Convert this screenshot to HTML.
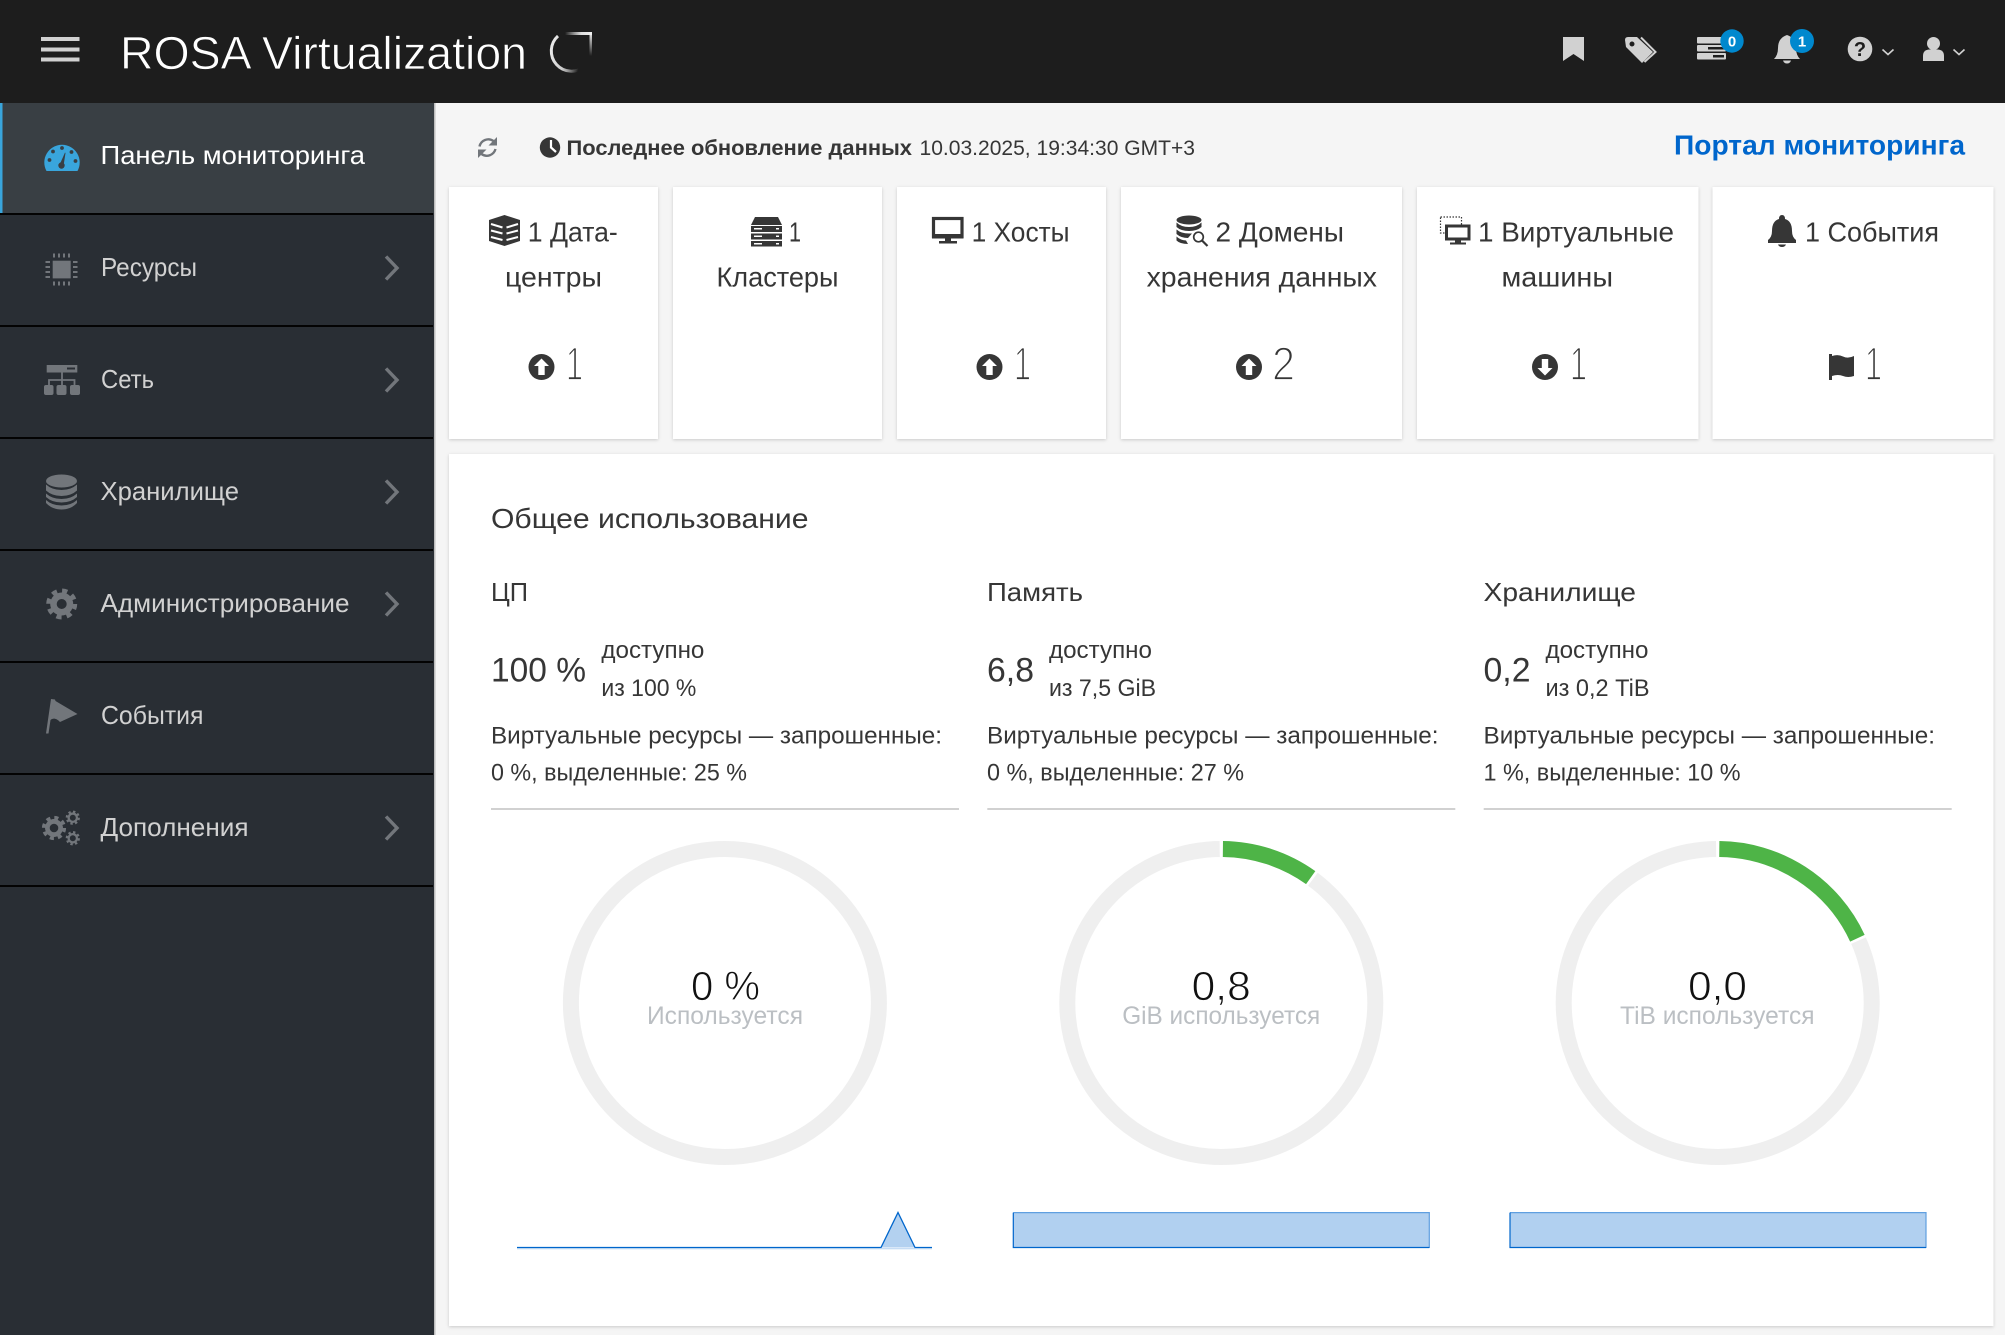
<!DOCTYPE html>
<html lang="ru"><head><meta charset="utf-8"><title>ROSA Virtualization</title>
<style>
html,body{margin:0;padding:0;background:#f5f5f5;width:2005px;height:1335px;overflow:hidden}
svg{display:block;font-family:"Liberation Sans",Arial,sans-serif}
text{white-space:pre}
.nav{font-size:26px;fill:#d1d1d1}
.card{font-size:27.5px;fill:#363636}
.num{font-size:47px;fill:#363636;stroke:#fff;stroke-width:1.7}
.h{font-size:26px;fill:#363636}
.big{font-size:34px;fill:#363636}
.sm{font-size:24px;fill:#363636}
.val{font-size:41px;fill:#111;stroke:#fff;stroke-width:.8;text-anchor:start}
.lbl{font-size:25px;fill:#bbbfc3}
.ic{fill:#72767b}
.dk{fill:#363636}
.hd{fill:#d1d1d1}
</style></head><body>
<svg width="2005" height="1335" viewBox="0 0 2005 1335" xmlns="http://www.w3.org/2000/svg">
<defs>
<filter id="sh" x="-5%" y="-5%" width="110%" height="110%"><feDropShadow dx="0" dy="1" stdDeviation="1.5" flood-color="#000" flood-opacity=".18"/></filter>
<linearGradient id="g1" x1="0" x2="1" y1="0" y2="0"><stop offset="0" stop-color="#fff" stop-opacity="0"/><stop offset=".6" stop-color="#ddd"/><stop offset="1" stop-color="#eee"/></linearGradient>
<linearGradient id="g2" x1="0" x2="0" y1="0" y2="1"><stop offset="0" stop-color="#eee"/><stop offset="1" stop-color="#fff" stop-opacity="0"/></linearGradient>
<linearGradient id="g3" x1="0" x2="1" y1="0" y2="0.3"><stop offset="0" stop-color="#eee"/><stop offset=".55" stop-color="#ccc"/><stop offset="1" stop-color="#fff" stop-opacity="0"/></linearGradient>
<g id="up"><circle r="13" fill="#363636"/><path d="M0-8.5 7.5-1H3.2V8H-3.2V-1H-7.5Z" fill="#fff"/></g>
<g id="down"><circle r="13" fill="#363636"/><path d="M0 8.5 7.5 1H3.2V-8H-3.2V1H-7.5Z" fill="#fff"/></g>
<g id="chev"><path d="M0 0 11 11.5 0 23" fill="none" stroke="#72767b" stroke-width="3.4"/></g>
<g id="gear"><circle r="11.5" class="ic"/><circle r="13.2" fill="none" stroke="#72767b" stroke-width="4.6" stroke-dasharray="5.2 5.17"/></g>
</defs>

<!-- backgrounds -->
<rect width="2005" height="1335" fill="#f5f5f5"/>
<rect width="2005" height="103" fill="#1d1d1d"/>
<rect y="103" width="434" height="1232" fill="#292e34"/>
<rect x="434" y="103" width="1.5" height="1232" fill="#bdbdbd"/>

<!-- header -->
<rect x="41" y="37" width="38.5" height="4" fill="#d1d1d1"/>
<rect x="41" y="47.5" width="38.5" height="4" fill="#d1d1d1"/>
<rect x="41" y="57.500" width="38.5" height="4" fill="#d1d1d1"/>
<text x="120" y="69" font-size="46" fill="#fff" stroke="#1d1d1d" stroke-width=".7" textLength="407" lengthAdjust="spacingAndGlyphs">ROSA Virtualization</text>
<rect x="565" y="32" width="27" height="3" fill="url(#g1)"/>
<rect x="589.500" y="32" width="2.500" height="24" fill="url(#g2)"/>
<path d="M558 36A19.500 19.500 0 1 0 585 66" stroke="url(#g3)" stroke-width="3" fill="none"/>

<!-- header icons -->
<path d="M1563 37H1584V61L1573.500 54 1563 61Z" class="hd"/>
<path d="M1625 40Q1625 37 1628 37H1637L1653 52 1642 63 1626 47ZM1632 41.500A2.500 2.500 0 1 0 1632 46.500 2.500 2.500 0 1 0 1632 41.500Z" class="hd" fill-rule="evenodd"/>
<path d="M1641 37.500 1655.500 52 1644.500 62" fill="none" stroke="#d1d1d1" stroke-width="2"/>
<g class="hd"><rect x="1697" y="37" width="29" height="6.500" rx="1"/><rect x="1697" y="45" width="29" height="6.500" rx="1"/><rect x="1697" y="53" width="29" height="6.500" rx="1"/></g>
<rect x="1713" y="55" width="11" height="2.500" fill="#1d1d1d"/><rect x="1708" y="47" width="16" height="2.500" fill="#1d1d1d"/>
<circle cx="1732" cy="41" r="11.700" fill="#0088ce"/>
<text x="1732" y="46.500" font-size="15" font-weight="bold" fill="#fff" text-anchor="middle">0</text>
<path d="M1787 35Q1796 38 1796 48 1796 55 1800 59H1774Q1778 55 1778 48 1778 38 1787 35ZM1783 60.500H1791Q1790 63.500 1787 63.500 1784 63.500 1783 60.500Z" class="hd"/>
<circle cx="1802" cy="41" r="12" fill="#0088ce"/>
<text x="1802" y="46.500" font-size="15" font-weight="bold" fill="#fff" text-anchor="middle">1</text>
<circle cx="1860" cy="49" r="12.300" class="hd"/>
<text x="1860" y="56" font-size="20" font-weight="bold" fill="#1d1d1d" text-anchor="middle">?</text>
<path d="M1882.500 49.500 1888 54.500 1893.500 49.500" fill="none" stroke="#d1d1d1" stroke-width="1.600"/>
<circle cx="1933.500" cy="43.500" r="6.500" class="hd"/>
<path d="M1923 61V56Q1923 50 1929 49.500H1938Q1944 50 1944 56V61Z" class="hd"/>
<path d="M1953.500 49.500 1959 54.500 1964.500 49.500" fill="none" stroke="#d1d1d1" stroke-width="1.600"/>

<!-- sidebar -->
<rect y="103" width="434" height="110" fill="#393f44"/>
<rect y="103" width="2.500" height="110" fill="#39a5dc"/>
<g fill="#030303">
<rect y="213" width="433" height="2"/><rect y="325" width="433" height="2"/><rect y="437" width="433" height="2"/><rect y="549" width="433" height="2"/><rect y="661" width="433" height="2"/><rect y="773" width="433" height="2"/><rect y="885" width="433" height="2"/>
</g>
<text x="100.500" y="164" class="nav" style="fill:#fff" textLength="264.500" lengthAdjust="spacingAndGlyphs">Панель мониторинга</text>
<text x="101" y="276" class="nav" textLength="96" lengthAdjust="spacingAndGlyphs">Ресурсы</text>
<text x="101" y="388" class="nav" textLength="53" lengthAdjust="spacingAndGlyphs">Сеть</text>
<text x="100.500" y="500" class="nav" textLength="138.500" lengthAdjust="spacingAndGlyphs">Хранилище</text>
<text x="100.500" y="612" class="nav" textLength="249" lengthAdjust="spacingAndGlyphs">Администрирование</text>
<text x="101" y="724" class="nav" textLength="102.500" lengthAdjust="spacingAndGlyphs">События</text>
<text x="100.500" y="836" class="nav" textLength="148" lengthAdjust="spacingAndGlyphs">Дополнения</text>
<use href="#chev" x="386" y="256.500"/><use href="#chev" x="386" y="368.500"/><use href="#chev" x="386" y="480.500"/><use href="#chev" x="386" y="592.500"/><use href="#chev" x="386" y="816.500"/>

<!-- dashboard icon -->
<path d="M46.500 171A17.700 17.700 0 1 1 77.500 171Z" fill="#39a5dc"/>
<g fill="#393f44"><circle cx="49.500" cy="160" r="1.900"/><circle cx="53" cy="151.500" r="1.900"/><circle cx="62" cy="148" r="1.900"/><circle cx="71.500" cy="152" r="1.900"/><circle cx="75.500" cy="161" r="1.900"/><circle cx="61.500" cy="165.500" r="3.200"/><path d="M59.500 165 65 152.500 65.500 153 63.500 166Z"/></g>

<!-- chip -->
<rect x="52.700" y="260.700" width="18" height="17.700" class="ic"/>
<g class="ic"><rect x="53" y="253.500" width="2" height="4"/><rect x="58" y="253.500" width="2" height="4"/><rect x="63" y="253.500" width="2" height="4"/><rect x="68" y="253.500" width="2" height="4"/>
<rect x="53" y="281.500" width="2" height="4"/><rect x="58" y="281.500" width="2" height="4"/><rect x="63" y="281.500" width="2" height="4"/><rect x="68" y="281.500" width="2" height="4"/>
<rect x="45.500" y="261" width="4.500" height="2"/><rect x="45.500" y="266" width="4.500" height="2"/><rect x="45.500" y="271" width="4.500" height="2"/><rect x="45.500" y="276" width="4.500" height="2"/>
<rect x="73" y="261" width="4.500" height="2"/><rect x="73" y="266" width="4.500" height="2"/><rect x="73" y="271" width="4.500" height="2"/><rect x="73" y="276" width="4.500" height="2"/></g>

<!-- network -->
<rect x="46.700" y="365" width="30.600" height="7.500" class="ic"/><rect x="67" y="367.500" width="8" height="2" fill="#292e34"/>
<path d="M62 372.500V385M49 385V380H74.500V385" fill="none" stroke="#72767b" stroke-width="1.800"/>
<rect x="44" y="385" width="9.500" height="10" rx="2" class="ic"/><rect x="56.500" y="385" width="10" height="10" rx="2" class="ic"/><rect x="70" y="385" width="10" height="10" rx="2" class="ic"/>

<!-- database -->
<ellipse cx="61.500" cy="481" rx="15.500" ry="6.500" class="ic"/>
<path d="M46 484.500Q52 490 61.500 490T77 484.500V490.500Q71 496 61.500 496T46 490.500ZM46 493.500Q52 499 61.500 499T77 493.500V497Q71 502.500 61.500 502.500T46 497ZM46 500Q52 505.500 61.500 505.500T77 500V503Q71 509.500 61.500 509.500T46 503Z" class="ic"/>

<!-- gear -->
<use href="#gear" x="61.700" y="604"/><circle cx="61.700" cy="604" r="5" fill="#292e34"/>
<!-- flag -->
<path d="M46 733.500 51 699 55 699.500 55.500 701 77.500 714 60 722C56 718 53 718 50.500 720L48.500 733.500Z" class="ic"/>
<!-- plugins -->
<g transform="translate(54,828) scale(.78)"><use href="#gear"/><circle r="5.500" fill="#292e34"/></g>
<g transform="translate(72.800,817.700) scale(.46)"><use href="#gear"/><circle r="6.500" fill="#292e34"/></g>
<g transform="translate(72.800,838.300) scale(.46)"><use href="#gear"/><circle r="6.500" fill="#292e34"/></g>

<!-- toolbar -->
<path d="M479.500 146.500A9 9 0 0 1 493.500 141M495.500 149A9 9 0 0 1 481.500 154" fill="none" stroke="#72767b" stroke-width="2.400"/>
<path d="M497 137V145.500H488.500ZM478 158V149.500H486.500Z" fill="#72767b"/>
<circle cx="550" cy="147.500" r="10.200" class="dk"/><path d="M551 140V147.500L556 152" fill="none" stroke="#fff" stroke-width="2.200"/>
<text x="566.500" y="155" font-size="21" font-weight="bold" fill="#363636" textLength="345.500" lengthAdjust="spacingAndGlyphs">Последнее обновление данных</text>
<text x="919.500" y="155" font-size="21" fill="#363636" textLength="275.500" lengthAdjust="spacingAndGlyphs">10.03.2025, 19:34:30 GMT+3</text>
<text x="1674" y="154.500" font-size="28" font-weight="bold" fill="#0066cc" textLength="291" lengthAdjust="spacingAndGlyphs">Портал мониторинга</text>

<!-- cards -->
<g fill="#fff" filter="url(#sh)">
<rect x="449" y="187" width="209" height="252"/>
<rect x="673" y="187" width="209" height="252"/>
<rect x="897" y="187" width="209" height="252"/>
<rect x="1121" y="187" width="281" height="252"/>
<rect x="1417" y="187" width="281.500" height="252"/>
<rect x="1712.500" y="187" width="281" height="252"/>
<rect x="449" y="454" width="1544.500" height="872"/>
</g>

<!-- card 1 -->
<path d="M504.500 215 520 220V241L504.500 246 489 241V220Z" class="dk"/>
<path d="M491 224 502.500 227.500M491 230.500 502.500 233.500M491 237 502.500 240M506.500 227.500 518 224M506.500 233.500 518 230.500M506.500 240 518 237" stroke="#fff" stroke-width="2" fill="none"/>
<text x="527.800" y="241.700" class="card" textLength="90" lengthAdjust="spacingAndGlyphs">1 Дата-</text>
<text x="505" y="286.700" class="card" textLength="97" lengthAdjust="spacingAndGlyphs">центры</text>
<use href="#up" x="541.500" y="367"/>
<text x="566" y="380" class="num" textLength="17" lengthAdjust="spacingAndGlyphs">1</text>
<!-- card 2 -->
<path d="M755 217H778L782 225H751Z" class="dk"/><rect x="751" y="226" width="31" height="6" class="dk"/><rect x="751" y="233.500" width="31" height="6" class="dk"/><rect x="751" y="241" width="31" height="5.500" class="dk"/>
<g fill="#fff"><rect x="754" y="228" width="8" height="1.500"/><rect x="776" y="228" width="3" height="1.500"/><rect x="754" y="235.500" width="8" height="1.500"/><rect x="776" y="235.500" width="3" height="1.500"/><rect x="754" y="243" width="8" height="1.500"/><rect x="776" y="243" width="3" height="1.500"/></g>
<text x="789" y="241.700" class="card" textLength="12" lengthAdjust="spacingAndGlyphs">1</text>
<text x="716.500" y="286.700" class="card" textLength="122" lengthAdjust="spacingAndGlyphs">Кластеры</text>
<!-- card 3 -->
<rect x="933.500" y="218.500" width="28.500" height="18" fill="none" stroke="#363636" stroke-width="3.200"/>
<rect x="932" y="234" width="31.500" height="4.500" class="dk"/><rect x="945" y="238" width="6" height="4" class="dk"/><rect x="939" y="241" width="18" height="2.500" class="dk"/>
<text x="971.600" y="241.700" class="card" textLength="98" lengthAdjust="spacingAndGlyphs">1 Хосты</text>
<use href="#up" x="989.500" y="367"/>
<text x="1014" y="380" class="num" textLength="17" lengthAdjust="spacingAndGlyphs">1</text>
<!-- card 4 -->
<ellipse cx="1189" cy="220" rx="12.500" ry="4.500" class="dk"/>
<path d="M1176.500 222.500Q1181 227 1189 227T1201.500 222.500V227Q1197 231 1189 231T1176.500 227ZM1176.500 229.500Q1181 233.500 1189 233.500L1192 233.500 1188 238Q1181 238 1176.500 234ZM1176.500 236.500Q1180 240 1186 240.500L1188 244Q1180 244 1176.500 240.500Z" class="dk"/>
<circle cx="1198.500" cy="237" r="4.800" fill="#fff" stroke="#363636" stroke-width="1.700"/>
<path d="M1202 240.500 1207.500 246" stroke="#363636" stroke-width="2.200"/>
<text x="1215.500" y="241.700" class="card" textLength="128.500" lengthAdjust="spacingAndGlyphs">2 Домены</text>
<text x="1146.600" y="286.700" class="card" textLength="230.400" lengthAdjust="spacingAndGlyphs">хранения данных</text>
<use href="#up" x="1249" y="367"/>
<text x="1272" y="380" class="num" textLength="23" lengthAdjust="spacingAndGlyphs">2</text>
<!-- card 5 -->
<rect x="1440.500" y="217" width="21" height="16" fill="none" stroke="#363636" stroke-width="1.200" stroke-dasharray="1.500 1.500"/>
<rect x="1446.500" y="226" width="22.500" height="13" fill="#fff" stroke="#363636" stroke-width="3"/>
<rect x="1445" y="238" width="25.500" height="2.500" class="dk"/><rect x="1455" y="240" width="6" height="3" class="dk"/><rect x="1450" y="242.500" width="16" height="2" class="dk"/>
<text x="1478" y="241.700" class="card" textLength="196" lengthAdjust="spacingAndGlyphs">1 Виртуальные</text>
<text x="1501.500" y="286.700" class="card" textLength="111.500" lengthAdjust="spacingAndGlyphs">машины</text>
<use href="#down" x="1545" y="367"/>
<text x="1570" y="380" class="num" textLength="17" lengthAdjust="spacingAndGlyphs">1</text>
<!-- card 6 -->
<path d="M1782 215Q1785 215 1785 219 1792 221 1792 231 1792 237 1796 240V243H1768V240Q1772 237 1772 231 1772 221 1779 219 1779 215 1782 215ZM1778 244.500H1786Q1785 247 1782 247T1778 244.500Z" class="dk"/>
<text x="1805" y="241.700" class="card" textLength="134" lengthAdjust="spacingAndGlyphs">1 События</text>
<path d="M1829 354H1832V356Q1838 354 1843 356.500T1854 356V376Q1848 378 1843 376T1832 376V380H1829Z" class="dk"/>
<text x="1865" y="380" class="num" textLength="17" lengthAdjust="spacingAndGlyphs">1</text>

<!-- panel -->
<text x="491" y="528" font-size="28" fill="#363636" textLength="317.500" lengthAdjust="spacingAndGlyphs">Общее использование</text>

<!-- col 1 -->
<text x="491" y="601" class="h" textLength="37" lengthAdjust="spacingAndGlyphs">ЦП</text>
<text x="491" y="681.700" class="big" textLength="95" lengthAdjust="spacingAndGlyphs">100 %</text>
<text x="601.400" y="658" class="sm" textLength="103" lengthAdjust="spacingAndGlyphs">доступно</text>
<text x="601.400" y="696" class="sm" textLength="95" lengthAdjust="spacingAndGlyphs">из 100 %</text>
<text x="491" y="743.300" class="sm" textLength="451" lengthAdjust="spacingAndGlyphs">Виртуальные ресурсы — запрошенные:</text>
<text x="491" y="780.700" class="sm" textLength="256" lengthAdjust="spacingAndGlyphs">0 %, выделенные: 25 %</text>
<rect x="491" y="808" width="468" height="2" fill="#d1d1d1"/>
<!-- col 2 -->
<text x="987" y="601" class="h" textLength="96" lengthAdjust="spacingAndGlyphs">Память</text>
<text x="987" y="681.700" class="big" textLength="47" lengthAdjust="spacingAndGlyphs">6,8</text>
<text x="1049" y="658" class="sm" textLength="103" lengthAdjust="spacingAndGlyphs">доступно</text>
<text x="1049" y="696" class="sm" textLength="107" lengthAdjust="spacingAndGlyphs">из 7,5 GiB</text>
<text x="987" y="743.300" class="sm" textLength="451.500" lengthAdjust="spacingAndGlyphs">Виртуальные ресурсы — запрошенные:</text>
<text x="987" y="780.700" class="sm" textLength="257" lengthAdjust="spacingAndGlyphs">0 %, выделенные: 27 %</text>
<rect x="987.300" y="808" width="468" height="2" fill="#d1d1d1"/>
<!-- col 3 -->
<text x="1483.500" y="601" class="h" textLength="152.500" lengthAdjust="spacingAndGlyphs">Хранилище</text>
<text x="1483.500" y="681.700" class="big" textLength="47" lengthAdjust="spacingAndGlyphs">0,2</text>
<text x="1545.500" y="658" class="sm" textLength="103" lengthAdjust="spacingAndGlyphs">доступно</text>
<text x="1545.500" y="696" class="sm" textLength="104" lengthAdjust="spacingAndGlyphs">из 0,2 TiB</text>
<text x="1483.500" y="743.300" class="sm" textLength="451.500" lengthAdjust="spacingAndGlyphs">Виртуальные ресурсы — запрошенные:</text>
<text x="1483.500" y="780.700" class="sm" textLength="257" lengthAdjust="spacingAndGlyphs">1 %, выделенные: 10 %</text>
<rect x="1483.700" y="808" width="468" height="2" fill="#d1d1d1"/>

<!-- donuts -->
<g fill="none" stroke="#efefef" stroke-width="16">
<circle cx="724.900" cy="1003" r="154"/><circle cx="1221.300" cy="1003" r="154"/><circle cx="1717.700" cy="1003" r="154"/>
</g>
<path d="M1219.700 849A154 154 0 0 1 1312.900 879.200" fill="none" stroke="#fff" stroke-width="18"/>
<path d="M1222.900 849A154 154 0 0 1 1310.700 877.600" fill="none" stroke="#4eb447" stroke-width="16"/>
<path d="M1716.100 849A154 154 0 0 1 1858.500 940.600" fill="none" stroke="#fff" stroke-width="18"/>
<path d="M1719.300 849A154 154 0 0 1 1857.400 938.200" fill="none" stroke="#4eb447" stroke-width="16"/>

<text x="691" y="1000" class="val" textLength="69" lengthAdjust="spacingAndGlyphs">0 %</text>
<text x="647" y="1024" class="lbl" textLength="156" lengthAdjust="spacingAndGlyphs">Используется</text>
<text x="1191.700" y="1000" class="val" textLength="59" lengthAdjust="spacingAndGlyphs">0,8</text>
<text x="1122.200" y="1024" class="lbl" textLength="198" lengthAdjust="spacingAndGlyphs">GiB используется</text>
<text x="1688" y="1000" class="val" textLength="59" lengthAdjust="spacingAndGlyphs">0,0</text>
<text x="1620" y="1024" class="lbl" textLength="194.500" lengthAdjust="spacingAndGlyphs">TiB используется</text>

<!-- sparklines -->
<path d="M881 1247.500 898 1212.500 915 1247.500Z" fill="#b3d1f0"/>
<path d="M517 1247.500H881L898 1212.500 915 1247.500H932" fill="none" stroke="#0066cc" stroke-width="1.300"/>
<path d="M517 1248.800H932" stroke="#b3d1f0" stroke-width="1"/>
<rect x="1013.300" y="1212.600" width="416" height="35.400" fill="#b1d0f0"/>
<path d="M1013.300 1212.600H1429.300V1248" fill="none" stroke="#5f9fe0" stroke-width="1.200"/>
<path d="M1013.300 1212.600V1247.500H1429.300" fill="none" stroke="#0066cc" stroke-width="1.200"/>
<rect x="1510" y="1212.600" width="416" height="35.400" fill="#b1d0f0"/>
<path d="M1510 1212.600H1926V1248" fill="none" stroke="#5f9fe0" stroke-width="1.200"/>
<path d="M1510 1212.600V1247.500H1926" fill="none" stroke="#0066cc" stroke-width="1.200"/>
</svg>
</body></html>
